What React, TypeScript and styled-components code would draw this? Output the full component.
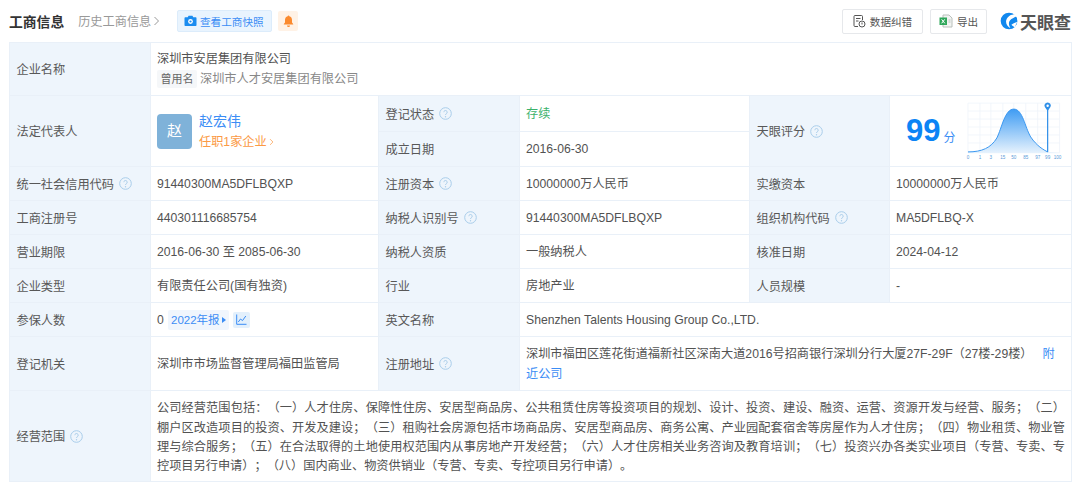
import React from 'react'
import styled, { createGlobalStyle } from 'styled-components'

const GlobalStyle = createGlobalStyle`
  html, body {
    margin: 0;
    padding: 0;
    background: #fff;
  }
  body {
    font-family: "Liberation Sans", "Noto Sans CJK SC", sans-serif;
    font-size: 12.2px;
    color: #525252;
    text-spacing-trim: space-all;
  }
`

const colors = {
  border: '#e9f0f8',
  label: '#eef5fc',
  blue: '#3b8df5',
}

const Page = styled.div`
  width: 1080px;
  height: 486px;
  padding: 0 9px;
  box-sizing: border-box;
  overflow: hidden;
`

const Header = styled.div`
  height: 42px;
  display: flex;
  align-items: center;
  box-sizing: border-box;
`

const Title = styled.h2`
  margin: 0;
  font-size: 13.8px;
  font-weight: 700;
  color: #333;
`

const HistoryLink = styled.span`
  margin-left: 14px;
  color: #999;
  display: flex;
  align-items: center;
  gap: 2px;
`

const SnapshotButton = styled.div`
  margin-left: 17px;
  height: 22px;
  width: 95px;
  padding-right: 2px;
  box-sizing: border-box;
  background: #e9f4fe;
  border: 1px solid #dcecfb;
  border-radius: 2px;
  color: ${colors.blue};
  font-size: 10.6px;
  display: flex;
  align-items: center;
  justify-content: center;
  gap: 3px;
`

const BellButton = styled.div`
  margin-left: 6px;
  width: 20px;
  height: 20px;
  background: #fff2e6;
  border-radius: 2px;
  display: flex;
  align-items: center;
  justify-content: center;
`

const HeaderRight = styled.div`
  margin-left: auto;
  display: flex;
  align-items: center;
`

const ToolButton = styled.div<{ $width: number }>`
  width: ${p => p.$width}px;
  height: 25px;
  box-sizing: border-box;
  border: 1px solid #e6e8eb;
  border-radius: 2px;
  margin-right: 7px;
  display: flex;
  align-items: center;
  justify-content: center;
  gap: 4px;
  font-size: 10.6px;
  color: #555;
`

const Logo = styled.div`
  margin-left: 6px;
  display: flex;
  align-items: center;
  gap: 1px;
  font-size: 17px;
  font-weight: 600;
  color: #555;
  width: 71px;
  white-space: nowrap;
`

const Table = styled.table`
  width: 1062px;
  table-layout: fixed;
  border-collapse: collapse;
  border: 1px solid ${colors.border};
`

const Row = styled.tr<{ $height: number }>`
  height: ${p => p.$height}px;
`

const Label = styled.td`
  background: ${colors.label};
  border: 1px solid ${colors.border};
  padding: 0 6.5px;
  color: #585858;
  box-sizing: border-box;
`

const LabelInner = styled.span`
  display: flex;
  align-items: center;
  gap: 5px;
`

const Value = styled.td`
  border: 1px solid ${colors.border};
  padding: 0 6px;
  box-sizing: border-box;
  line-height: 20px;
`

const Green = styled.span`
  color: #3bb26b;
`

const AliasLine = styled.div`
  display: flex;
  align-items: center;
  color: #888;
`

const AliasTag = styled.span`
  background: #f5f7f9;
  color: #666;
  font-size: 11px;
  width: 40px;
  height: 18px;
  line-height: 18px;
  text-align: center;
  border-radius: 2px;
  margin-right: 3px;
`

const Person = styled.div`
  display: flex;
  align-items: center;
  gap: 7px;
`

const Avatar = styled.div`
  width: 35px;
  height: 35px;
  background: #7fb2d9;
  border-radius: 4px;
  color: #fff;
  font-size: 15px;
  display: flex;
  align-items: center;
  justify-content: center;
`

const PersonName = styled.div`
  color: ${colors.blue};
  font-size: 14px;
  line-height: 20px;
`

const PersonLink = styled.div`
  color: #fb9a45;
  line-height: 20px;
  margin-top: 1px;
  display: flex;
  align-items: center;
  gap: 2px;
`

const ScoreBox = styled.div`
  display: flex;
  align-items: center;
  padding-left: 10px;
`

const ScoreNumber = styled.span`
  color: #0b84f5;
  font-size: 31px;
  font-weight: 700;
  line-height: 36px;
`

const ScoreUnit = styled.span`
  color: #3b8df5;
  font-size: 12px;
  margin: 13px 10px 0 3px;
`

const InsuredRow = styled.div`
  display: flex;
  align-items: center;
`

const ReportTag = styled.span`
  margin-left: 4px;
  width: 61px;
  height: 20px;
  background: #f0f6fd;
  border-radius: 2px;
  color: ${colors.blue};
  display: flex;
  align-items: center;
  justify-content: center;
  gap: 2px;
  font-size: 11.5px;
`

const Caret = styled.i`
  width: 0;
  height: 0;
  border-left: 4px solid ${colors.blue};
  border-top: 3px solid transparent;
  border-bottom: 3px solid transparent;
`

const TrendTag = styled.span`
  margin-left: 4px;
  width: 17px;
  height: 16px;
  background: #e3f0fc;
  border-radius: 2px;
  display: flex;
  align-items: center;
  justify-content: center;
`

const NearbyLink = styled.span<{ $lead?: boolean }>`
  color: ${colors.blue};
  margin-left: ${p => (p.$lead ? '10px' : '0')};
`

const Scope = styled.div`
  padding-top: 4px;
  text-align: justify;
  line-height: 19.3px;
`

const Help = () => (
  <svg width="13" height="13" viewBox="0 0 13 13">
    <circle cx="6.5" cy="6.5" r="5.8" fill="none" stroke="#a9cdea" />
    <path
      d="M4.8 5.2a1.7 1.7 0 1 1 2.7 1.4c-.6.4-1 .7-1 1.4"
      fill="none"
      stroke="#a9cdea"
    />
    <circle cx="6.5" cy="9.7" r=".7" fill="#a9cdea" />
  </svg>
)

const Chevron = ({ color, size = 7 }: { color: string; size?: number }) => (
  <svg width={size} height={size + 3} viewBox="0 0 7 10">
    <path d="M1.5 1l4 4-4 4" fill="none" stroke={color} strokeWidth="1" />
  </svg>
)

const CameraIcon = () => (
  <svg width="13" height="12" viewBox="0 0 13 12">
    <path
      d="M1.5 2.2h2.2L4.6.8h3.8l.9 1.4h2.2c.6 0 1 .4 1 1v6.9c0 .6-.4 1-1 1h-10c-.6 0-1-.4-1-1V3.2c0-.6.4-1 1-1z"
      fill="#1a8cf0"
    />
    <circle cx="6.5" cy="6.5" r="2.4" fill="#fff" />
    <circle cx="6.5" cy="6.5" r="1.1" fill="#1a8cf0" />
  </svg>
)

const BellIcon = () => (
  <svg width="11" height="12" viewBox="0 0 11 12">
    <path
      d="M5.5.5c.5 0 .8.3.8.8 1.8.4 2.7 1.9 2.7 3.7v2.4l1.2 1.6v.5H.8V9l1.2-1.6V5c0-1.8.9-3.3 2.7-3.7 0-.5.3-.8.8-.8z"
      fill="#fb8a2e"
    />
    <path d="M4 10.4h3a1.5 1.5 0 0 1-3 0z" fill="#fb8a2e" />
  </svg>
)

const ReportIcon = () => (
  <svg width="13" height="14" viewBox="0 0 13 14">
    <path
      d="M9.5 6V2.5a1 1 0 0 0-1-1H2a1 1 0 0 0-1 1v9a1 1 0 0 0 1 1h3"
      fill="none"
      stroke="#555"
    />
    <path d="M3 4.5h4.5M3 7h2.5" stroke="#555" />
    <circle cx="9" cy="10" r="3" fill="none" stroke="#555" />
    <path d="M9 8.5v2" stroke="#555" />
  </svg>
)

const ExcelIcon = () => (
  <svg width="14" height="14" viewBox="0 0 14 14">
    <path d="M4 1h6l3 3v9H4z" fill="#f2f4f2" stroke="#b9c0bc" />
    <rect x="0.5" y="3.5" width="7.5" height="7.5" fill="#2fa75a" />
    <path d="M2.6 5.3l3.2 4M5.8 5.3l-3.2 4" stroke="#fff" />
    <path d="M9.5 6h2M9.5 8h2" stroke="#b9c0bc" />
  </svg>
)

const TrendIcon = () => (
  <svg width="11" height="11" viewBox="0 0 11 11">
    <path d="M.7.5v9.8h9.8" fill="none" stroke={colors.blue} />
    <path d="M2.3 8l2.2-3 2 1.6L9.8 2" fill="none" stroke={colors.blue} />
  </svg>
)

const LogoMark = () => (
  <svg width="20" height="20" viewBox="0 0 20 20">
    <circle cx="9.5" cy="10" r="8.8" fill="#1188ee" />
    <path
      d="M20 3.5C14 2 8 4 6.5 9.5 5.8 13 8 16 11 17.5 8.5 13.5 9 10 12 8c2.5-1.6 5-2.5 8-4.5z"
      fill="#fff"
    />
    <path d="M19 11c-2 .3-5 1-7 3 1.5 1.5 3 2.5 5 3.5-1-2-1-4.5 2-6.5z" fill="#fff" />
    <circle cx="14.5" cy="10.5" r="1.4" fill="#1188ee" />
  </svg>
)

const chartTicks = [
  ['0', 2],
  ['1', 14],
  ['3', 25],
  ['15', 37],
  ['50', 48],
  ['85', 60],
  ['97', 72],
  ['99', 82],
  ['100', 92],
] as const

const bellPath =
  'M2 51C16 51 25 47 31 37C36 27 39 8 48 8C57 8 59 26 65 36C71 45 78 49 82 51'

const ScoreChart = () => (
  <svg width="100" height="60" viewBox="0 0 100 60">
    <defs>
      <linearGradient id="bell" x1="0" y1="0" x2="0" y2="1">
        <stop offset="0" stopColor="#3f9cf3" />
        <stop offset="1" stopColor="#e6f2fd" />
      </linearGradient>
    </defs>
    {[2, 14, 25, 37, 48, 60, 72, 82, 94].map(x => (
      <path key={x} d={`M${x} 2V52`} stroke="#eef4fa" strokeWidth=".8" />
    ))}
    {[2, 10, 18, 26, 34, 42, 52].map(y => (
      <path key={y} d={`M2 ${y}H94`} stroke="#eef4fa" strokeWidth=".8" />
    ))}
    <path d={`${bellPath}L94 52H2Z`} fill="url(#bell)" />
    <path d={bellPath} fill="none" stroke="#3a97f0" strokeWidth="1" />
    <path d="M82 8V51" stroke="#2f8fe8" strokeWidth="1.2" />
    <path d="M82 10L79.2 6A3.2 3.2 0 1 1 84.8 6Z" fill="#2f8fe8" />
    <circle cx="82" cy="4.6" r="1.2" fill="#fff" />
    {chartTicks.map(([text, x]) => (
      <text
        key={text}
        x={x}
        y="58"
        fontSize="4.6"
        fill="#5a9ad8"
        textAnchor="middle"
      >
        {text}
      </text>
    ))}
  </svg>
)

const App = () => (
  <Page>
    <GlobalStyle />
    <Header>
      <Title>工商信息</Title>
      <HistoryLink>
        历史工商信息
        <Chevron color="#999" />
      </HistoryLink>
      <SnapshotButton>
        <CameraIcon />
        查看工商快照
      </SnapshotButton>
      <BellButton>
        <BellIcon />
      </BellButton>
      <HeaderRight>
        <ToolButton $width={81}>
          <ReportIcon />
          数据纠错
        </ToolButton>
        <ToolButton $width={57}>
          <ExcelIcon />
          导出
        </ToolButton>
        <Logo>
          <LogoMark />
          天眼查
        </Logo>
      </HeaderRight>
    </Header>
    <Table>
      <colgroup>
        <col style={{ width: 141 }} />
        <col style={{ width: 228 }} />
        <col style={{ width: 141 }} />
        <col style={{ width: 230 }} />
        <col style={{ width: 140 }} />
        <col style={{ width: 182 }} />
      </colgroup>
      <tbody>
        <Row $height={53}>
          <Label>企业名称</Label>
          <Value colSpan={5}>
            <div>深圳市安居集团有限公司</div>
            <AliasLine>
              <AliasTag>曾用名</AliasTag>
              深圳市人才安居集团有限公司
            </AliasLine>
          </Value>
        </Row>
        <Row $height={36}>
          <Label rowSpan={2}>法定代表人</Label>
          <Value rowSpan={2}>
            <Person>
              <Avatar>赵</Avatar>
              <div>
                <PersonName>赵宏伟</PersonName>
                <PersonLink>
                  任职1家企业
                  <Chevron color="#fb9a45" size={5} />
                </PersonLink>
              </div>
            </Person>
          </Value>
          <Label>
            <LabelInner>
              登记状态
              <Help />
            </LabelInner>
          </Label>
          <Value>
            <Green>存续</Green>
          </Value>
          <Label rowSpan={2}>
            <LabelInner>
              天眼评分
              <Help />
            </LabelInner>
          </Label>
          <Value rowSpan={2}>
            <ScoreBox>
              <ScoreNumber>99</ScoreNumber>
              <ScoreUnit>分</ScoreUnit>
              <ScoreChart />
            </ScoreBox>
          </Value>
        </Row>
        <Row $height={35}>
          <Label>成立日期</Label>
          <Value>2016-06-30</Value>
        </Row>
        <Row $height={34}>
          <Label>
            <LabelInner>
              统一社会信用代码
              <Help />
            </LabelInner>
          </Label>
          <Value>91440300MA5DFLBQXP</Value>
          <Label>
            <LabelInner>
              注册资本
              <Help />
            </LabelInner>
          </Label>
          <Value>10000000万人民币</Value>
          <Label>实缴资本</Label>
          <Value>10000000万人民币</Value>
        </Row>
        <Row $height={34}>
          <Label>工商注册号</Label>
          <Value>440301116685754</Value>
          <Label>
            <LabelInner>
              纳税人识别号
              <Help />
            </LabelInner>
          </Label>
          <Value>91440300MA5DFLBQXP</Value>
          <Label>
            <LabelInner>
              组织机构代码
              <Help />
            </LabelInner>
          </Label>
          <Value>MA5DFLBQ-X</Value>
        </Row>
        <Row $height={34}>
          <Label>营业期限</Label>
          <Value>2016-06-30 至 2085-06-30</Value>
          <Label>纳税人资质</Label>
          <Value>一般纳税人</Value>
          <Label>核准日期</Label>
          <Value>2024-04-12</Value>
        </Row>
        <Row $height={34}>
          <Label>企业类型</Label>
          <Value>有限责任公司(国有独资)</Value>
          <Label>行业</Label>
          <Value>房地产业</Value>
          <Label>人员规模</Label>
          <Value>-</Value>
        </Row>
        <Row $height={34}>
          <Label>参保人数</Label>
          <Value>
            <InsuredRow>
              0
              <ReportTag>
                2022年报
                <Caret />
              </ReportTag>
              <TrendTag>
                <TrendIcon />
              </TrendTag>
            </InsuredRow>
          </Value>
          <Label>英文名称</Label>
          <Value colSpan={3}>Shenzhen Talents Housing Group Co.,LTD.</Value>
        </Row>
        <Row $height={54}>
          <Label>登记机关</Label>
          <Value>深圳市市场监督管理局福田监管局</Value>
          <Label>
            <LabelInner>
              注册地址
              <Help />
            </LabelInner>
          </Label>
          <Value colSpan={3}>
            深圳市福田区莲花街道福新社区深南大道2016号招商银行深圳分行大厦27F-29F（27楼-29楼）
            <NearbyLink $lead>附</NearbyLink>
            <NearbyLink>近公司</NearbyLink>
          </Value>
        </Row>
        <Row $height={91}>
          <Label>
            <LabelInner>
              经营范围
              <Help />
            </LabelInner>
          </Label>
          <Value colSpan={5}>
            <Scope>
              公司经营范围包括：（一）人才住房、保障性住房、安居型商品房、公共租赁住房等投资项目的规划、设计、投资、建设、融资、运营、资源开发与经营、服务；（二）棚户区改造项目的投资、开发及建设；（三）租购社会房源包括市场商品房、安居型商品房、商务公寓、产业园配套宿舍等房屋作为人才住房；（四）物业租赁、物业管理与综合服务；（五）在合法取得的土地使用权范围内从事房地产开发经营；（六）人才住房相关业务咨询及教育培训；（七）投资兴办各类实业项目（专营、专卖、专控项目另行申请）；（八）国内商业、物资供销业（专营、专卖、专控项目另行申请）。
            </Scope>
          </Value>
        </Row>
      </tbody>
    </Table>
  </Page>
)

export default App
